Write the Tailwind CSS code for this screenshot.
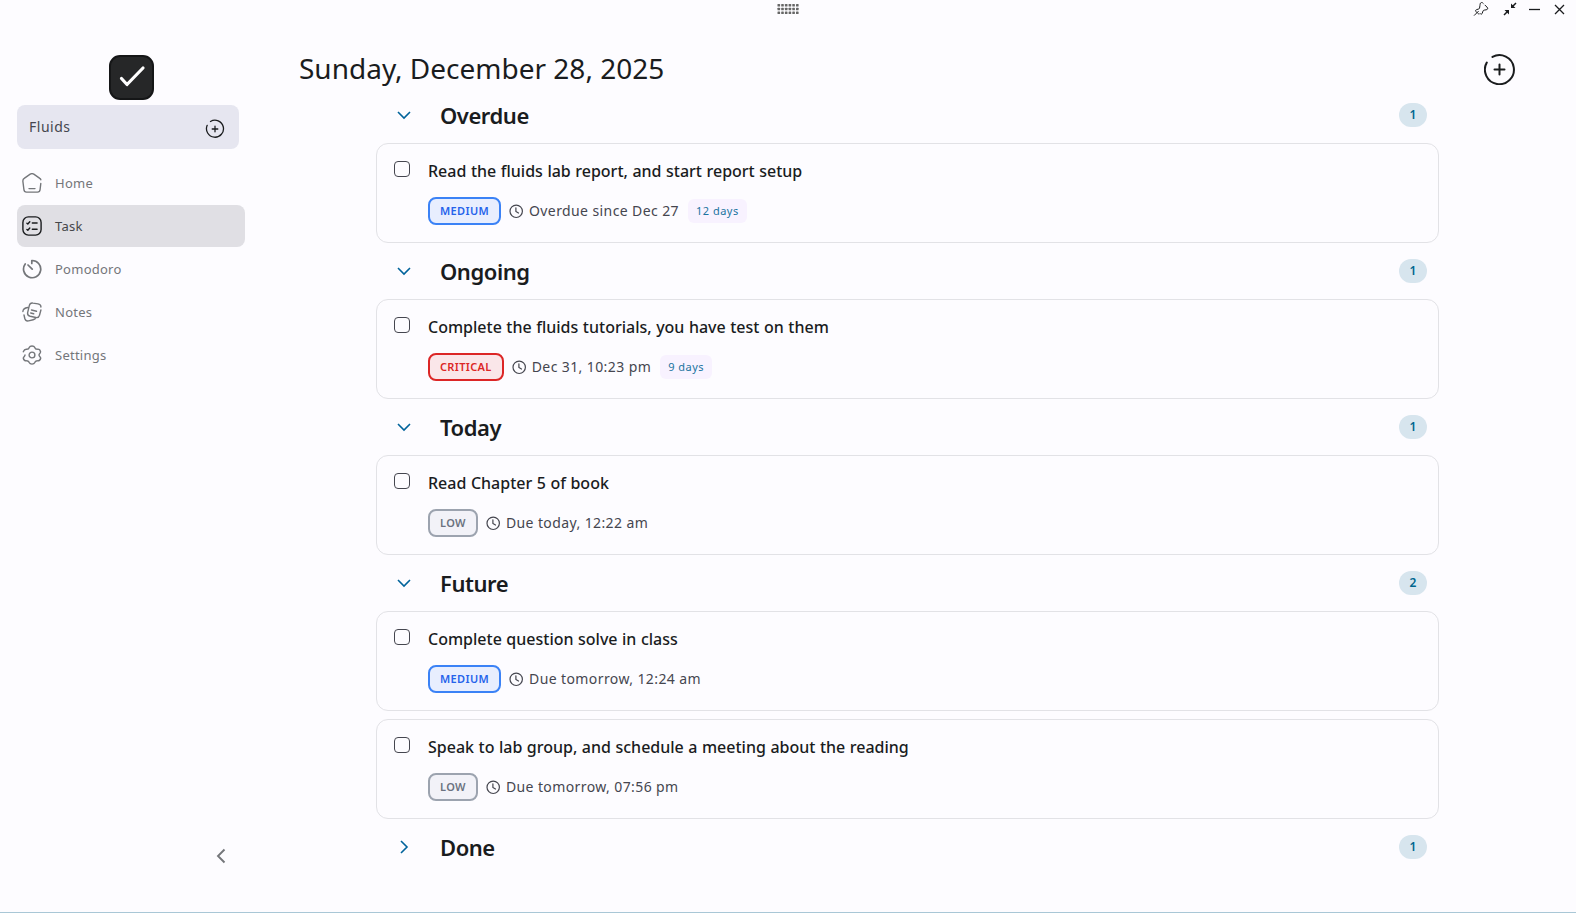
<!DOCTYPE html>
<html lang="en">
<head>
    <meta charset="UTF-8">
    <meta name="viewport" content="width=device-width, initial-scale=1.0">
    <title>Tasks</title>
    <script src="https://cdn.jsdelivr.net/npm/@tailwindcss/browser@4"></script>
</head>
<body class="bg-[#fdfcff] text-[#1a1c1e] font-['Noto_Sans',sans-serif] h-screen overflow-hidden flex flex-col border-b border-[#a9c7d6]">
    <!-- window bar -->
    <header class="h-5 shrink-0 grid grid-cols-3 items-center pb-0.5">
        <span></span>
        <svg class="justify-self-center w-[22px] h-3 ml-px" viewBox="0 0 22 12" fill="#666">
            <g id="grip"></g>
        </svg>
        <div class="justify-self-end flex items-center pr-2 gap-[9px] text-[#1a1c1e]">
            <svg class="w-4 h-4 mr-1" viewBox="0 0 24 24" fill="none" stroke="currentColor" stroke-width="1.500" stroke-linecap="round" stroke-linejoin="round"><path d="M2 21.500l6-6M9.300 19.400c-1 .2-1.500-.3-2.200-1L4.500 15.800c-1.200-1.200-.6-2.300.6-2.700l3.600-1.200c.6-.2 1-.6 1.100-1.200l.6-3.700c.3-1.800 0-4.200 2.300-4.700 1-.2 1.700.3 2.600 1.200M18 6.200l2.800 2.800c2.200 2.200 1.300 3.800-1 4.200l-3 .5c-1 .2-1.500.5-1.800 1.400l-1.100 3.200c-.3 1.200-1.400 2.200-2.600 1"/></svg>
            <svg class="w-4 h-4" viewBox="0 0 16 16" fill="none" stroke="currentColor" stroke-width="1.500"><path d="M14 2L9.500 6.500M2 14L6.500 9.500"/><path d="M9 2.500V7h4.500zM2.500 9H7v4.500z" fill="currentColor" stroke="none"/></svg>
            <svg class="w-4 h-4" viewBox="0 0 16 16" stroke="currentColor" stroke-width="1.300"><path d="M2 8.500h11"/></svg>
            <svg class="w-4 h-4" viewBox="0 0 16 16" stroke="currentColor" stroke-width="1.300"><path d="M3 4l9 9M12 4l-9 9"/></svg>
        </div>
    </header>

    <div class="flex flex-1 min-h-0">
        <aside class="w-[262px] shrink-0 pl-[17px] pt-[35px] flex flex-col">
            <div class="w-[229px] flex justify-center">
                <div class="w-[45px] h-[45px] rounded-[11px] bg-[#262728] border-2 border-[#151617] flex items-center justify-center">
                    <svg class="w-[27px] h-6 ml-px -mt-0.5" viewBox="0 0 27 24" fill="none" stroke="#fff" stroke-width="3.200" stroke-linecap="round" stroke-linejoin="round"><path d="M2.500 13.500L8 19.500L24 3"/></svg>
                </div>
            </div>
            <div class="mt-[5px] w-[222px] h-11 rounded-lg bg-[#e6e6f0] flex items-center justify-between pl-3 pr-3.5">
                <span class="text-sm tracking-[0.5px] text-[#45464f]">Fluids</span>
                <svg class="w-5 h-5 mt-[4px]" viewBox="0 0 20 20" fill="none" stroke="#1a1c1e" stroke-width="1.300" stroke-linecap="round"><path d="M5.500 2.500A8.500 8.500 0 1 1 2.200 6.300M10 7.200v5.600M7.200 10h5.600"/></svg>
            </div>
            <nav class="mt-[13px] w-[228px] flex flex-col gap-px text-[13px] tracking-[0.25px] text-[#74767a]">
                <a class="h-[42px] rounded-lg flex items-center pl-[5px] gap-[13px]">
                    <svg class="w-5 h-5" viewBox="0 0 20 20" fill="none" stroke="currentColor" stroke-width="1.400" stroke-linecap="round"><path d="M18.800 10.500l-.7 6c-.2 1.800-1 2.600-2.600 2.600h-11c-1.600 0-2.400-.8-2.600-2.600L.9 8.500C.7 7 1 6.200 2.200 5.400l6-4.200c1.300-.8 2.300-.8 3.600 0l6 4.200c.6.4.9.8 1 1.300M7 15.600h6"/></svg>
                    <span class="pt-0.5">Home</span>
                </a>
                <a class="h-[42px] rounded-lg flex items-center pl-[5px] gap-[13px] bg-[#e0dfe4] text-[#45464a]">
                    <svg class="w-5 h-5 text-[#1a1c1e]" viewBox="0 0 20 20" fill="none" stroke="currentColor" stroke-width="1.400" stroke-linecap="round" stroke-linejoin="round"><rect x=".9" y=".9" width="18.200" height="18.200" rx="5.500"/><path d="M10.300 7h4.800M10.300 13.300h4.800M4.900 7.200l.9.800 2-2.300M4.900 13.500l.9.800 2-2.300"/></svg>
                    <span class="pt-0.5">Task</span>
                </a>
                <a class="h-[42px] rounded-lg flex items-center pl-[5px] gap-[13px]">
                    <svg class="w-5 h-5" viewBox="0 0 20 20" fill="none" stroke="currentColor" stroke-width="1.700" stroke-linecap="round" stroke-linejoin="round"><path d="M9.800 4.500V1.500A8.600 8.600 0 1 1 3.200 5M6 6l4.200 4.200"/></svg>
                    <span class="pt-0.5">Pomodoro</span>
                </a>
                <a class="h-[42px] rounded-lg flex items-center pl-[5px] gap-[13px]">
                    <svg class="w-5 h-5" viewBox="0 0 20 20" fill="none" stroke="currentColor" stroke-width="1.400" stroke-linecap="round" stroke-linejoin="round"><path d="M18.900 8l-1.400 5.200c-.6 2-1.700 2.700-3.700 2.300l-5.600-1.300c-2.200-.6-3-1.600-2.500-3.800l1.600-6.800C7.900 1.400 8.900.7 11 1.100l5 .8c2.200.5 3 1.400 2.900 3.100M9.500 8l5 1.300M8.700 11l3 .8M5.800 5.500C2.500 6 1 7 .9 9.500M2 13l.8 3.500c.6 2 1.600 2.900 3.700 2.400l4.700-1.200c1.500-.4 2.300-1 2.700-2.200"/></svg>
                    <span class="pt-0.5">Notes</span>
                </a>
                <a class="h-[42px] rounded-lg flex items-center pl-[5px] gap-[13px]">
                    <svg class="w-5 h-5" viewBox="0 0 20 20" fill="none" stroke="currentColor" stroke-width="1.400" stroke-linecap="round" stroke-linejoin="round"><circle cx="10" cy="10" r="2.900"/><path d="M1.300 6.800C2 5 3 4 4.600 4.200 6.500 4.300 7 3.500 7.400 2.200 8 .5 12 .5 12.600 2.200 13 3.500 13.500 4.300 15.400 4.200 17 4 18.300 5.500 18.600 7M18.600 7C18.400 8.300 17 8.700 17 10c0 1.500 1.800 1.800 1.700 3.200-.4 1.500-1.700 2.800-3.300 2.600-1.900-.1-2.400.7-2.800 2-.6 1.700-4.600 1.700-5.200 0-.4-1.300-.9-2.100-2.800-2C3 16 1.700 14.700 1.300 13.200 1.200 11.800 3 11.500 3 10"/></svg>
                    <span class="pt-0.5">Settings</span>
                </a>
            </nav>
            <svg class="mt-auto mb-11 ml-[192px] w-6 h-6" viewBox="0 0 24 24" fill="none" stroke="#74767a" stroke-width="1.900"><path d="M15.500 5.500L9 12l6.500 6.500"/></svg>
        </aside>

        <main class="flex-1 pl-[37px]">
            <div class="flex items-start justify-between h-[67px] pt-[30px] pr-[60px]">
                <h1 class="text-[28px] leading-9">Sunday, December 28, 2025</h1>
                <svg class="w-8 h-8 mt-[3px]" viewBox="0 0 32 32" fill="none" stroke="currentColor" stroke-width="2" stroke-linecap="round"><path d="M8.500 3.900A14.500 14.500 0 1 1 2.800 9.500M15.500 11.500v10M10.500 16.500h10"/></svg>
            </div>
            <div id="board" class="w-[1063px] ml-[77px]"></div>
        </main>
    </div>

    <script>
        const groups = [
            { name: "Overdue", count: 1, tasks: [
                { title: "Read the fluids lab report, and start report setup", level: "MEDIUM", due: "Overdue since Dec 27", days: "12 days" }
            ] },
            { name: "Ongoing", count: 1, tasks: [
                { title: "Complete the fluids tutorials, you have test on them", level: "CRITICAL", due: "Dec 31, 10:23 pm", days: "9 days" }
            ] },
            { name: "Today", count: 1, tasks: [
                { title: "Read Chapter 5 of book", level: "LOW", due: "Due today, 12:22 am" }
            ] },
            { name: "Future", count: 2, tasks: [
                { title: "Complete question solve in class", level: "MEDIUM", due: "Due tomorrow, 12:24 am" },
                { title: "Speak to lab group, and schedule a meeting about the reading", level: "LOW", due: "Due tomorrow, 07:56 pm" }
            ] },
            { name: "Done", count: 1, tasks: [] }
        ];

        const levelClass = {
            MEDIUM: "bg-[#e8eefe] border-[#3b82f6] text-[#2563eb]",
            CRITICAL: "bg-[#fae6e9] border-[#dc2626] text-[#dc2626]",
            LOW: "bg-[#f2f2f8] border-[#9ca3af] text-[#6b7280]"
        };

        function taskCard(task) {
            const days = task.days
                ? `<span class="ml-[9px] h-6 px-2 rounded-md bg-[#f8f2ff] text-[#1b74a0] text-[11px] tracking-[0.5px] flex items-center">${task.days}</span>`
                : "";
            return `
                <div class="h-[100px] rounded-xl border border-[#e2e2e6] pl-[17px] flex">
                    <span class="mt-[17px] w-4 h-4 shrink-0 rounded-[4px] border border-[#45464f]"></span>
                    <div class="ml-[18px] pt-[15px]">
                        <p class="text-base leading-6 font-medium [word-spacing:0.36px]">${task.title}</p>
                        <div class="mt-[14px] h-7 flex items-center">
                            <span class="h-7 px-[10px] rounded-lg border-2 text-[11px] font-semibold tracking-[0.35px] flex items-center ${levelClass[task.level]}">${task.level}</span>
                            <svg class="ml-2 w-[15px] h-[15px] text-[#45464f]" viewBox="0 0 15 15" fill="none" stroke="currentColor" stroke-width="1.200" stroke-linecap="round"><circle cx="7.200" cy="7.300" r="6.200"/><path d="M6.900 3.800v3.600l2.600 1.600"/></svg>
                            <span class="ml-[5px] text-sm tracking-[0.4px] text-[#45464f]">${task.due}</span>
                            ${days}
                        </div>
                    </div>
                </div>`;
        }

        function groupBlock(group) {
            const arrow = group.tasks.length ? "M2 5l6 6 6-6" : "M5 2l6 6-6 6";
            return `
                <section>
                    <div class="h-14 pl-5 pr-3 flex items-center">
                        <svg class="w-4 h-4" viewBox="0 0 16 16" fill="none" stroke="#00639b" stroke-width="1.600"><path d="${arrow}"/></svg>
                        <h2 class="ml-[28px] text-[22px] leading-7 font-semibold tracking-[-0.45px]">${group.name}</h2>
                        <span class="ml-auto w-7 h-6 rounded-full bg-[#d7e5ee] text-[#00658f] text-xs font-semibold flex items-center justify-center">${group.count}</span>
                    </div>
                    <div class="flex flex-col gap-2">${group.tasks.map(taskCard).join("")}</div>
                </section>`;
        }

        document.getElementById("board").innerHTML = groups.map(groupBlock).join("");

        // drag handle dots
        let dots = "";
        for (let row = 0; row < 3; row++) {
            for (let col = 0; col < 6; col++) {
                dots += `<rect x="${0.5 + col * 3.7}" y="${1 + row * 3.7}" width="2.600" height="2.600" rx="0.6"/>`;
            }
        }
        document.getElementById("grip").innerHTML = dots;
    </script>
</body>
</html>
